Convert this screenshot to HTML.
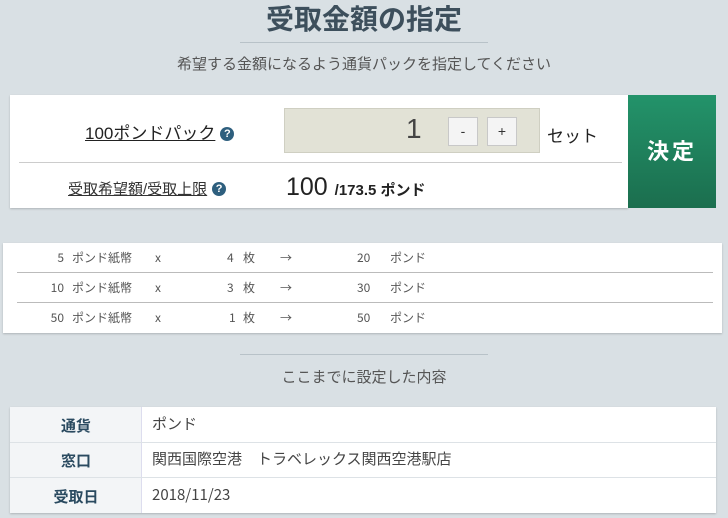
<!DOCTYPE html>
<html><head><meta charset="utf-8"><style>
*{margin:0;padding:0;box-sizing:border-box}
html,body{width:728px;height:518px;overflow:hidden}
body{background:#d9e0e4;font-family:"Liberation Sans","Noto Sans CJK JP",sans-serif;color:#333;position:relative}
.a{position:absolute;white-space:nowrap}
.q{display:inline-block;width:14px;height:14px;border-radius:50%;background:#2e5f7e;color:#fff;font-size:11px;font-weight:bold;text-align:center;line-height:14px;vertical-align:2px;margin-left:5px;font-family:"Liberation Sans",sans-serif}
.btn{position:absolute;width:30px;height:29px;background:#f4f4f4;border:1px solid #c8c8c8;text-align:center;line-height:27px;font-size:14px}
.row{position:absolute;left:0;width:100%;height:30px;font-size:12px;color:#555;font-family:"Noto Sans CJK JP",sans-serif}
.row span{position:absolute;top:6px;line-height:18px}
.lb{position:absolute;left:0;width:132px;text-align:center;font-size:15px;font-weight:bold;color:#2a4a60}
.vl{position:absolute;left:142px;font-size:15px;color:#444;white-space:nowrap;font-family:"Noto Sans CJK JP",sans-serif;line-height:22px}
</style></head><body>
<div class="a" style="left:0;width:728px;text-align:center;top:2px;font-size:28px;font-weight:bold;color:#3d4f5c;line-height:36px">受取金額の指定</div>
<div class="a" style="left:240px;width:248px;top:42px;height:1px;background:#b8c2c8"></div>
<div class="a" style="left:0;width:728px;text-align:center;top:53px;font-size:15px;color:#555">希望する金額になるよう通貨パックを指定してください</div>

<div class="a" style="left:10px;top:95px;width:618px;height:113px;background:#fff;box-shadow:0 1px 2px rgba(0,0,0,.2)"></div>
<div class="a" style="left:628px;top:95px;width:88px;height:113px;background:linear-gradient(#23936a,#1b6e4e);color:#fff;font-size:22px;font-weight:bold;text-align:center;line-height:113px;letter-spacing:3px">決定</div>
<div class="a" style="left:85px;top:119px;font-size:17px;color:#222"><span style="text-decoration:underline">100ポンドパック</span><span class="q">?</span></div>
<div class="a" style="left:284px;top:108px;width:256px;height:45px;background:#e2e2d6;border:1px solid #cfcfc2"></div>
<div class="a" style="left:406px;top:113px;font-size:28px;color:#444;font-weight:300">1</div>
<div class="btn" style="left:448px;top:117px">-</div>
<div class="btn" style="left:487px;top:117px">+</div>
<div class="a" style="left:547px;top:122px;font-size:17px;color:#222">セット</div>
<div class="a" style="left:19px;top:162px;width:603px;height:1px;background:#ccc"></div>
<div class="a" style="left:68px;top:178px;font-size:15px;color:#333"><span style="text-decoration:underline">受取希望額/受取上限</span><span class="q">?</span></div>
<div class="a" style="left:286px;top:173px;font-size:25px;color:#222">100 <span style="font-size:15px;font-weight:bold">/173.5 ポンド</span></div>

<div class="a" style="left:3px;top:243px;width:719px;height:90px;background:#fff;box-shadow:0 1px 2px rgba(0,0,0,.2)">
<div class="row" style="top:0"><span style="right:658px">5</span><span style="left:69px">ポンド紙幣</span><span style="left:152px">x</span><span style="left:224px">4</span><span style="left:240px">枚</span><span style="left:277px">→</span><span style="left:354px">20</span><span style="left:387px">ポンド</span></div>
<div class="a" style="left:14px;top:29px;width:696px;height:1px;background:#bbb"></div>
<div class="row" style="top:30px"><span style="right:658px">10</span><span style="left:69px">ポンド紙幣</span><span style="left:152px">x</span><span style="left:224px">3</span><span style="left:240px">枚</span><span style="left:277px">→</span><span style="left:354px">30</span><span style="left:387px">ポンド</span></div>
<div class="a" style="left:14px;top:59px;width:696px;height:1px;background:#bbb"></div>
<div class="row" style="top:60px"><span style="right:658px">50</span><span style="left:69px">ポンド紙幣</span><span style="left:152px">x</span><span style="left:226px">1</span><span style="left:240px">枚</span><span style="left:277px">→</span><span style="left:354px">50</span><span style="left:387px">ポンド</span></div>
</div>

<div class="a" style="left:240px;top:354px;width:248px;height:1px;background:#b8c2c8"></div>
<div class="a" style="left:0;width:728px;text-align:center;top:366px;font-size:15px;color:#555">ここまでに設定した内容</div>

<div class="a" style="left:10px;top:407px;width:706px;height:106px;background:#fff;box-shadow:0 1px 2px rgba(0,0,0,.2)">
<div class="a" style="left:0;top:0;width:132px;height:106px;background:#f3f5f7;border-right:1px solid #dde"></div>
<div class="a" style="left:0;top:35px;width:706px;height:1px;background:#dde2e6"></div>
<div class="a" style="left:0;top:70px;width:706px;height:1px;background:#dde2e6"></div>
<div class="lb" style="top:8px">通貨</div>
<div class="lb" style="top:43px">窓口</div>
<div class="lb" style="top:79px">受取日</div>
<div class="vl" style="top:6px">ポンド</div>
<div class="vl" style="top:41px">関西国際空港　トラベレックス関西空港駅店</div>
<div class="vl" style="top:77px">2018/11/23</div>
</div>
</body></html>
